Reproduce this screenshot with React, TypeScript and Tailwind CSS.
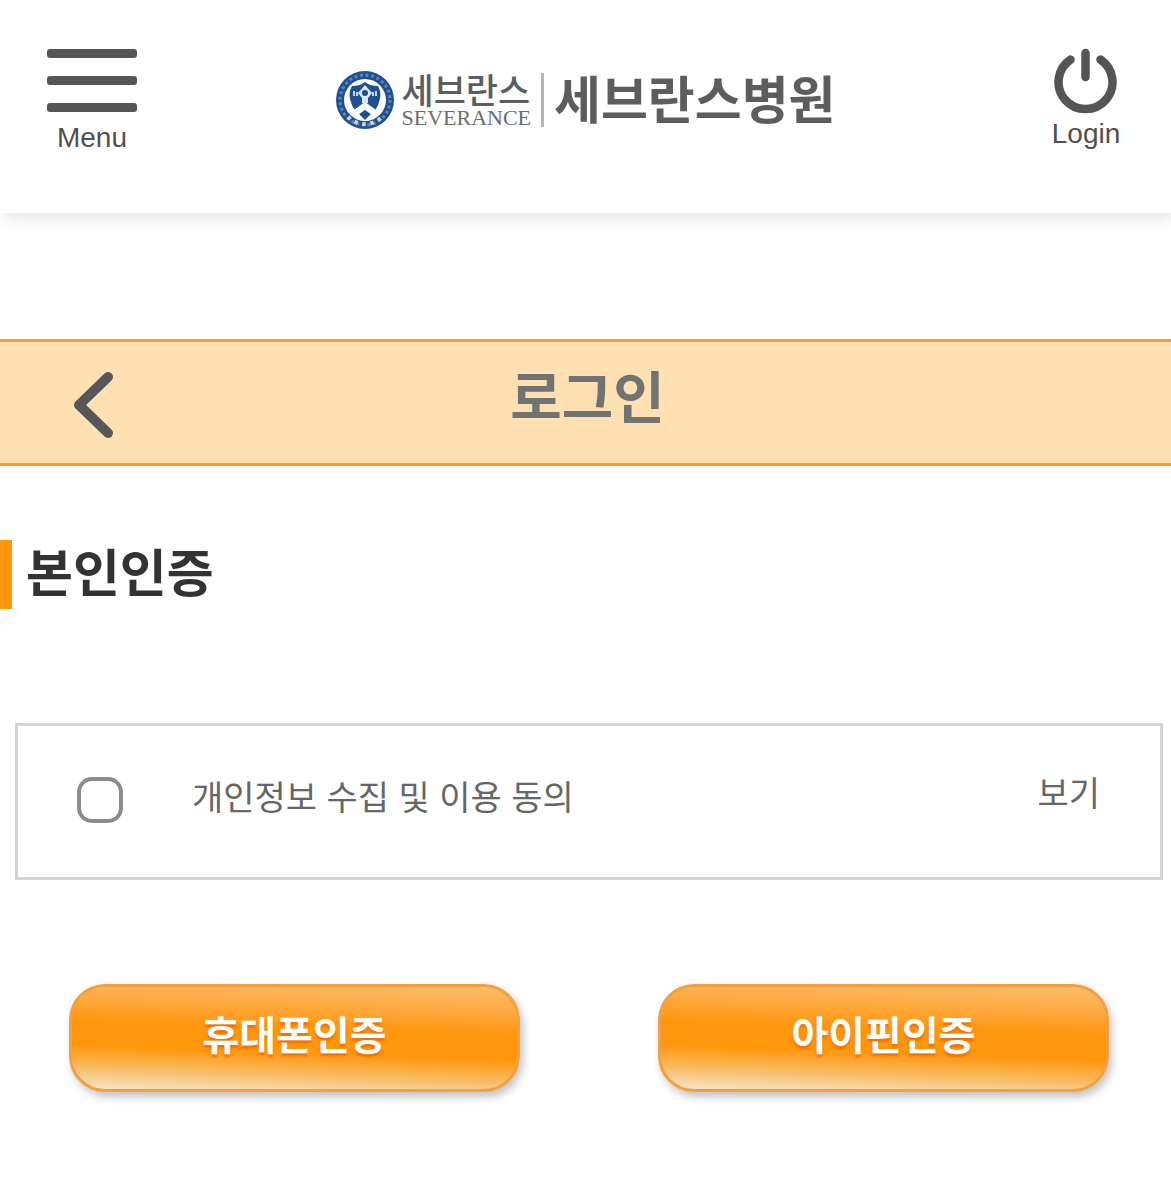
import { useState } from "react";

const Emblem = () => (
  <svg viewBox="0 0 60 60" className="h-15 w-15 shrink-0" aria-hidden="true">
    <circle cx="30" cy="30" r="29" fill="#20508f" />
    <circle
      cx="30"
      cy="30"
      r="25"
      fill="none"
      stroke="#5d86b8"
      strokeWidth="3"
      strokeDasharray="3 2.6"
    />
    <path
      d="M13 47A24 24 0 0 0 47 47"
      fill="none"
      stroke="#c6d5e6"
      strokeWidth="4"
      strokeDasharray="3.5 4.5"
    />
    <circle cx="30" cy="30" r="21" fill="#fff" />
    <path
      d="M30 12c4 3 8 4 13 4 3 5 3 11 1 16-2 8-7 12-14 16-7-4-12-8-14-16-2-5-2-11 1-16 5 0 9-1 13-4z"
      fill="#20508f"
    />
    <path d="M30 32l14 10-4 5-10-7-10 7-4-5z" fill="#fff" />
    <path d="M30 15l7 8-4 5v5h-6v-5l-4-5z" fill="#dbe6f2" />
    <circle cx="30" cy="23" r="3" fill="#20508f" />
    <path d="M18 21h2v5h-2zM21 22h2v4h-2zM37 22h2v4h-2zM40 21h2v5h-2z" fill="#c6d5e6" />
    <path d="M30 40l5 5-5 5-5-5z" fill="#20508f" />
  </svg>
);

const Header = () => (
  <header className="flex h-[213px] items-start justify-between bg-white px-[47px] pt-12 shadow-[4px_4px_16px_rgba(0,0,0,0.12)]">
    <button type="button" className="flex w-[90px] flex-col items-center">
      <svg viewBox="0 0 90 66" className="h-[66px] w-[90px]" aria-hidden="true">
        <g fill="#555">
          <rect x="0" y="1" width="90" height="9" rx="3" />
          <rect x="0" y="28" width="90" height="9" rx="3" />
          <rect x="0" y="55" width="90" height="9" rx="3" />
        </g>
      </svg>
      <span className="mt-2 text-[28px] leading-8 text-[#4f4f4f]">Menu</span>
    </button>

    <a href="#" className="mt-5 mr-3.5 flex items-center text-[#5c5d5f]">
      <Emblem />
      <span className="ml-1.5 flex flex-col">
        <span className="text-[35px] leading-9 font-medium">세브란스</span>
        <span className="font-['Liberation_Serif',serif] text-[22px] leading-4 text-[#6c6d6f]">
          SEVERANCE
        </span>
      </span>
      <span className="mx-2.5 h-[54px] w-[3px] bg-[#b5b5b5]" />
      <span className="pt-1 text-[51px] leading-[60px] font-bold">세브란스병원</span>
    </a>

    <button type="button" className="flex w-[76px] flex-col items-center">
      <svg viewBox="0 0 64 66" className="h-[66px] w-16" aria-hidden="true">
        <g fill="none" stroke="#555" strokeWidth="8.5" strokeLinecap="round">
          <path d="M16.5 11.6A27 27 0 1 0 46.5 11.6" />
          <path d="M31.5 5v24" />
        </g>
      </svg>
      <span className="mt-1 text-[28px] leading-8 text-[#4f4f4f]">Login</span>
    </button>
  </header>
);

const AuthButton = ({ label }: { label: string }) => (
  <button
    type="button"
    className="h-[108px] flex-1 rounded-[36px] border-3 border-[#f5a040] bg-[linear-gradient(182deg,#f9bd6a_0%,#ffa93f_22%,#ff960c_42%,#ff960c_62%,#f8b95c_80%,#f5e3cc_100%)] pb-1 text-[40px] leading-[60px] font-bold text-white shadow-[3px_5px_9px_rgba(0,0,0,0.24)] [text-shadow:0_3px_2px_rgba(240,90,0,0.6)]"
  >
    {label}
  </button>
);

const App = () => {
  const [agreed, setAgreed] = useState(false);

  return (
    <div className="min-h-screen bg-white pb-20 font-['Liberation_Sans','Noto_Sans_CJK_KR',sans-serif]">
      <Header />

      <main>
        <div className="mt-[126px] grid h-[127px] grid-cols-[1fr_auto_1fr] items-center border-y-3 border-[#f99b33] bg-[#fee0b2]">
          <button type="button" aria-label="뒤로" className="ml-[72px] w-11">
            <svg viewBox="0 0 44 68" className="mt-1 h-[68px] w-11" aria-hidden="true">
              <path
                d="M36 6L7 34l29 28"
                fill="none"
                stroke="#555758"
                strokeWidth="10"
                strokeLinecap="round"
                strokeLinejoin="round"
              />
            </svg>
          </button>
          <h1 className="pb-2 pl-1 text-[56px] leading-[80px] font-bold text-[#6f7473]">
            로그인
          </h1>
        </div>

        <h2 className="mt-[74px] border-l-12 border-[#ff960c] pl-3.5 text-[51px] leading-[69px] font-bold text-[#333]">
          본인인증
        </h2>

        <div className="mt-[114px] mr-2 ml-[15px] flex h-[157px] items-center border-3 border-[#d4d4d4] pr-[60px] pb-1 pl-[59px] text-[34px] leading-[50px] text-[#666]">
          <input
            id="agree"
            type="checkbox"
            checked={agreed}
            onChange={(e) => setAgreed(e.target.checked)}
            className="h-[46px] w-[46px] appearance-none rounded-[15px] border-4 border-[#8c8c90] bg-white checked:bg-[#ff960c]"
          />
          <label htmlFor="agree" className="ml-[69px] pb-1">
            개인정보 수집 및 이용 동의
          </label>
          <a href="#" className="ml-auto pb-3">
            보기
          </a>
        </div>

        <div className="mt-[104px] flex gap-[138px] pr-[62px] pl-[69px]">
          <AuthButton label="휴대폰인증" />
          <AuthButton label="아이핀인증" />
        </div>
      </main>
    </div>
  );
};

export default App;
